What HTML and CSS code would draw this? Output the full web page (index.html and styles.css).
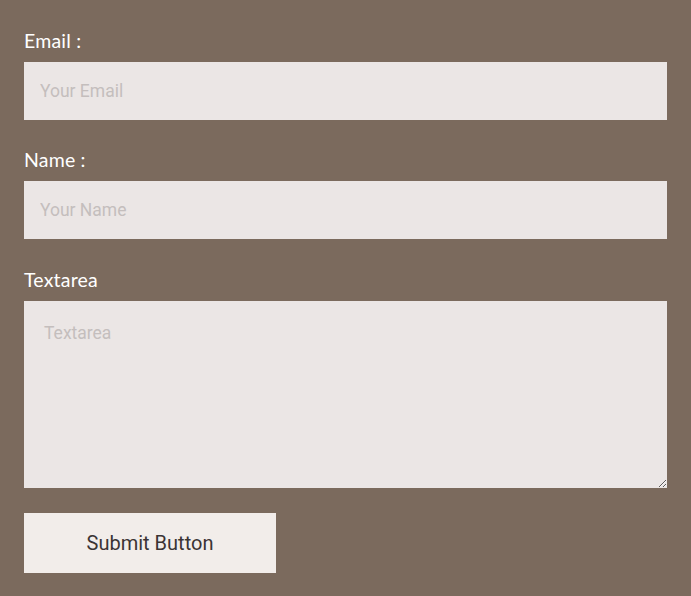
FILE: index.html
```html
<!DOCTYPE html>
<html>
<head>
<meta charset="utf-8">
<link rel="stylesheet" href="styles.css">
</head>
<body>
<form class="form">
  <div class="field">
    <label class="label">Email :</label>
    <input class="input" type="text" placeholder="Your Email">
  </div>
  <div class="field">
    <label class="label">Name :</label>
    <input class="input" type="text" placeholder="Your Name">
  </div>
  <div class="field field-last">
    <label class="label">Textarea</label>
    <textarea class="textarea" placeholder="Textarea"></textarea>
  </div>
  <button class="button" type="button">Submit Button</button>
</form>
</body>
</html>
```
FILE: styles.css
```css
html, body {
  margin: 0;
  padding: 0;
  background: #7b6a5d;
}
.form {
  display: flex;
  flex-direction: column;
  padding: 29px 24px 0 24px;
}
.field {
  display: flex;
  flex-direction: column;
  gap: 9px;
  margin-bottom: 28px;
}
.field-last {
  margin-top: 1px;
  margin-bottom: 25px;
}
.label {
  font-family: "Lato", sans-serif;
  font-size: 19.5px;
  line-height: 24px;
  color: #ffffff;
  letter-spacing: 0.2px;
}
.input, .textarea {
  box-sizing: border-box;
  width: 643px;
  border: none;
  outline: none;
  background: #ebe6e5;
  font-family: "Roboto", sans-serif;
  font-size: 17.5px;
  color: #3b3434;
  margin: 0;
}
.input {
  height: 58px;
  padding: 0 16px;
}
.textarea {
  height: 187px;
  padding: 22px 20px;
  resize: vertical;
  display: block;
}
.input::placeholder, .textarea::placeholder {
  color: #c4bebd;
}
.button {
  width: 252px;
  height: 60px;
  border: none;
  background: #f2edea;
  font-family: "Roboto", sans-serif;
  font-size: 20px;
  color: #3b3434;
  margin: 0;
  padding: 0;
}
```
